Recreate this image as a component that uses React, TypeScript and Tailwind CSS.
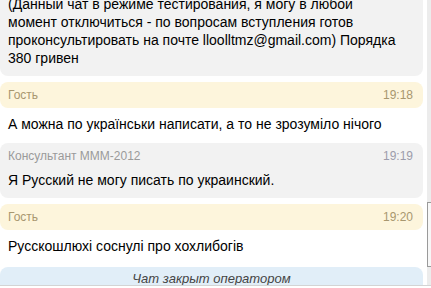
import React from 'react';

type Msg = {
  author: string;
  time?: string;
  text: string;
  role: 'guest' | 'consultant';
};

const messages: Msg[] = [
  {
    author: 'Консультант МММ-2012',
    role: 'consultant',
    text:
      '(Данный чат в режиме тестирования, я могу в любой момент отключиться - по вопросам вступления готов проконсультировать на почте lloolltmz@gmail.com) Порядка 380 гривен',
  },
  {
    author: 'Гость',
    time: '19:18',
    role: 'guest',
    text: 'А можна по українськи написати, а то не зрозуміло нічого',
  },
  {
    author: 'Консультант МММ-2012',
    time: '19:19',
    role: 'consultant',
    text: 'Я Русский не могу писать по украинский.',
  },
  {
    author: 'Гость',
    time: '19:20',
    role: 'guest',
    text: 'Русскошлюхі соснулі про хохлибогів',
  },
];

const MessageHeader: React.FC<{ msg: Msg }> = ({ msg }) => (
  <div
    className={
      msg.role === 'guest'
        ? 'flex h-[26px] items-center justify-between rounded-lg bg-[#fdf5dc] pl-2 pr-[10px] text-[12px] text-[#a8976f]'
        : 'flex h-[26px] items-center justify-between pl-2 pr-[10px] text-[12px] text-[#9a9a9a]'
    }
  >
    <span>{msg.author}</span>
    <span className={msg.role === 'guest' ? 'text-[#a8976f]' : 'text-[#9c9cab]'}>{msg.time}</span>
  </div>
);

const App: React.FC = () => {
  return (
    <div
      className="flex h-[288px] w-[431px] flex-col overflow-hidden bg-white text-black"
      style={{ fontFamily: '"Liberation Sans", Arial, sans-serif' }}
    >
      <div className="flex h-[285px] shrink-0">
        {/* сообщения */}
        <div className="w-[423px] shrink-0 overflow-hidden">
          <div className="-mt-[33px] flex flex-col gap-[6px]">
            {messages.map((msg, i) =>
              msg.role === 'consultant' ? (
                <div key={i} className="rounded-lg bg-[#f2f2f2]">
                  <MessageHeader msg={msg} />
                  <div className="pl-2 pr-[18px] pt-[2px] pb-[9px] text-[14px] leading-[18px]">{msg.text}</div>
                </div>
              ) : (
                <div key={i}>
                  <MessageHeader msg={msg} />
                  <div className="pl-2 pr-[18px] pt-[7px] pb-[4px] text-[14px] leading-[18px]">{msg.text}</div>
                </div>
              )
            )}
            <div className="mt-[2px] flex h-[22px] items-center justify-center rounded-t-lg bg-[#e1eef8] pt-[2px] text-[13px] italic text-[#444]">
              Чат закрыт оператором
            </div>
          </div>
        </div>

        {/* полоса прокрутки */}
        <div className="ml-[4px] w-[4px] bg-[#ececec]">
          <div className="mt-[202px] h-[65px] border-y border-l border-[#9a9a9a] bg-[#f7f7f7]" />
        </div>
      </div>
      <div className="h-px bg-[#d4d4d4]" />
    </div>
  );
};

export default App;
